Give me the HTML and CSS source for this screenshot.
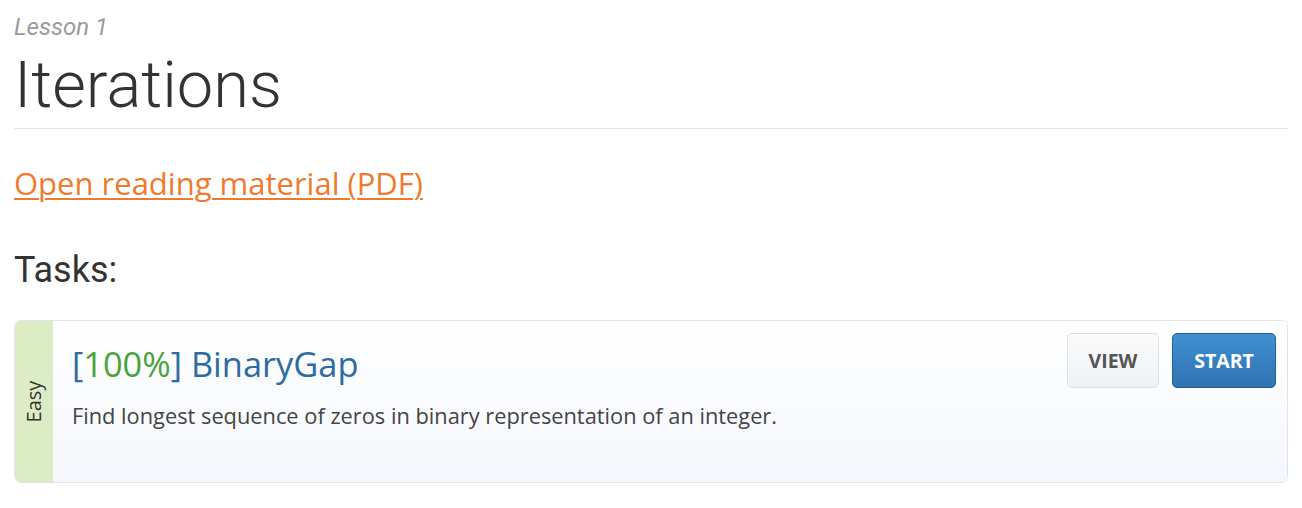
FILE: index.html
```html
<!DOCTYPE html>
<html>
<head>
<meta charset="utf-8">
<link rel="stylesheet" href="styles.css">
</head>
<body>
<div class="page">
  <div class="lesson-label">Lesson 1</div>
  <h1 class="lesson-title">Iterations</h1>
  <p class="reading"><a href="#" class="reading-link">Open reading material (PDF)</a></p>
  <h2 class="tasks-heading">Tasks:</h2>
  <div class="task-card">
    <div class="difficulty"><span class="difficulty-text">Easy</span></div>
    <div class="task-body">
      <div class="task-info">
        <h3 class="task-title"><span class="bracket">[</span><span class="score">100%</span><span class="bracket">]</span> BinaryGap</h3>
        <p class="task-desc">Find longest sequence of zeros in binary representation of an integer.</p>
      </div>
      <div class="task-actions">
        <a href="#" class="btn btn-view">VIEW</a>
        <a href="#" class="btn btn-start">START</a>
      </div>
    </div>
  </div>
</div>
</body>
</html>
```
FILE: styles.css
```css
html, body {
  margin: 0;
  padding: 0;
  background: #ffffff;
}
.page {
  padding: 0 14px;
  font-family: "Open Sans", "DejaVu Sans", sans-serif;
  color: #333;
}
.lesson-label {
  font-family: Roboto, sans-serif;
  font-style: italic;
  font-size: 24px;
  line-height: 28px;
  color: #9a9a9a;
  padding-top: 13px;
}
.lesson-title {
  font-family: Roboto, sans-serif;
  font-weight: 300;
  font-size: 65px;
  line-height: 85px;
  color: #333;
  margin: 2px 0 0 0;
  padding: 0;
  border-bottom: 1px solid #dde7ef;
}
.reading {
  margin: 34px 0 0 0;
  font-size: 31px;
  line-height: 40px;
}
.reading-link {
  color: #ef7a2d;
  text-decoration: underline;
  text-decoration-thickness: 1.5px;
  text-underline-offset: 3px;
}
.tasks-heading {
  font-family: Roboto, sans-serif;
  font-weight: 400;
  font-size: 36px;
  line-height: 42px;
  color: #333;
  margin: 46px 0 0 0;
}
.task-card {
  margin-top: 29px;
  display: flex;
  border: 1px solid #dce5ee;
  border-radius: 7px;
  overflow: hidden;
  height: 163px;
  box-sizing: border-box;
}
.difficulty {
  width: 38px;
  flex: none;
  background: #dcedc6;
  display: flex;
  align-items: center;
  justify-content: center;
}
.difficulty-text {
  transform: rotate(-90deg);
  font-size: 20px;
  color: #333;
  white-space: nowrap;
}
.task-body {
  flex: 1;
  display: flex;
  justify-content: space-between;
  align-items: flex-start;
  background: linear-gradient(to bottom, #ffffff, #f4f7fc);
  padding: 12px 11px 0 19px;
}
.task-info {
  padding-top: 9px;
}
.task-title {
  margin: 0;
  font-weight: 400;
  font-size: 34.4px;
  line-height: 44px;
  color: #2c6ca3;
}
.bracket { color: #2c6ca3; }
.score { color: #4aa33b; }
.task-desc {
  margin: 15px 0 0 0;
  font-size: 21.8px;
  line-height: 30px;
  color: #444;
}
.task-actions {
  display: flex;
  gap: 13px;
}
.btn {
  display: flex;
  align-items: center;
  justify-content: center;
  box-sizing: border-box;
  height: 55px;
  border-radius: 5px;
  font-weight: 700;
  font-size: 19.5px;
  text-decoration: none;
}
.btn-view {
  width: 92px;
  border: 1px solid #dbe1e7;
  background: linear-gradient(to bottom, #fbfbfc, #eff2f5);
  color: #555;
}
.btn-start {
  width: 104px;
  border: 1px solid #275f92;
  background: linear-gradient(to bottom, #3f90d3, #2f72b0);
  color: #fff;
}
```
